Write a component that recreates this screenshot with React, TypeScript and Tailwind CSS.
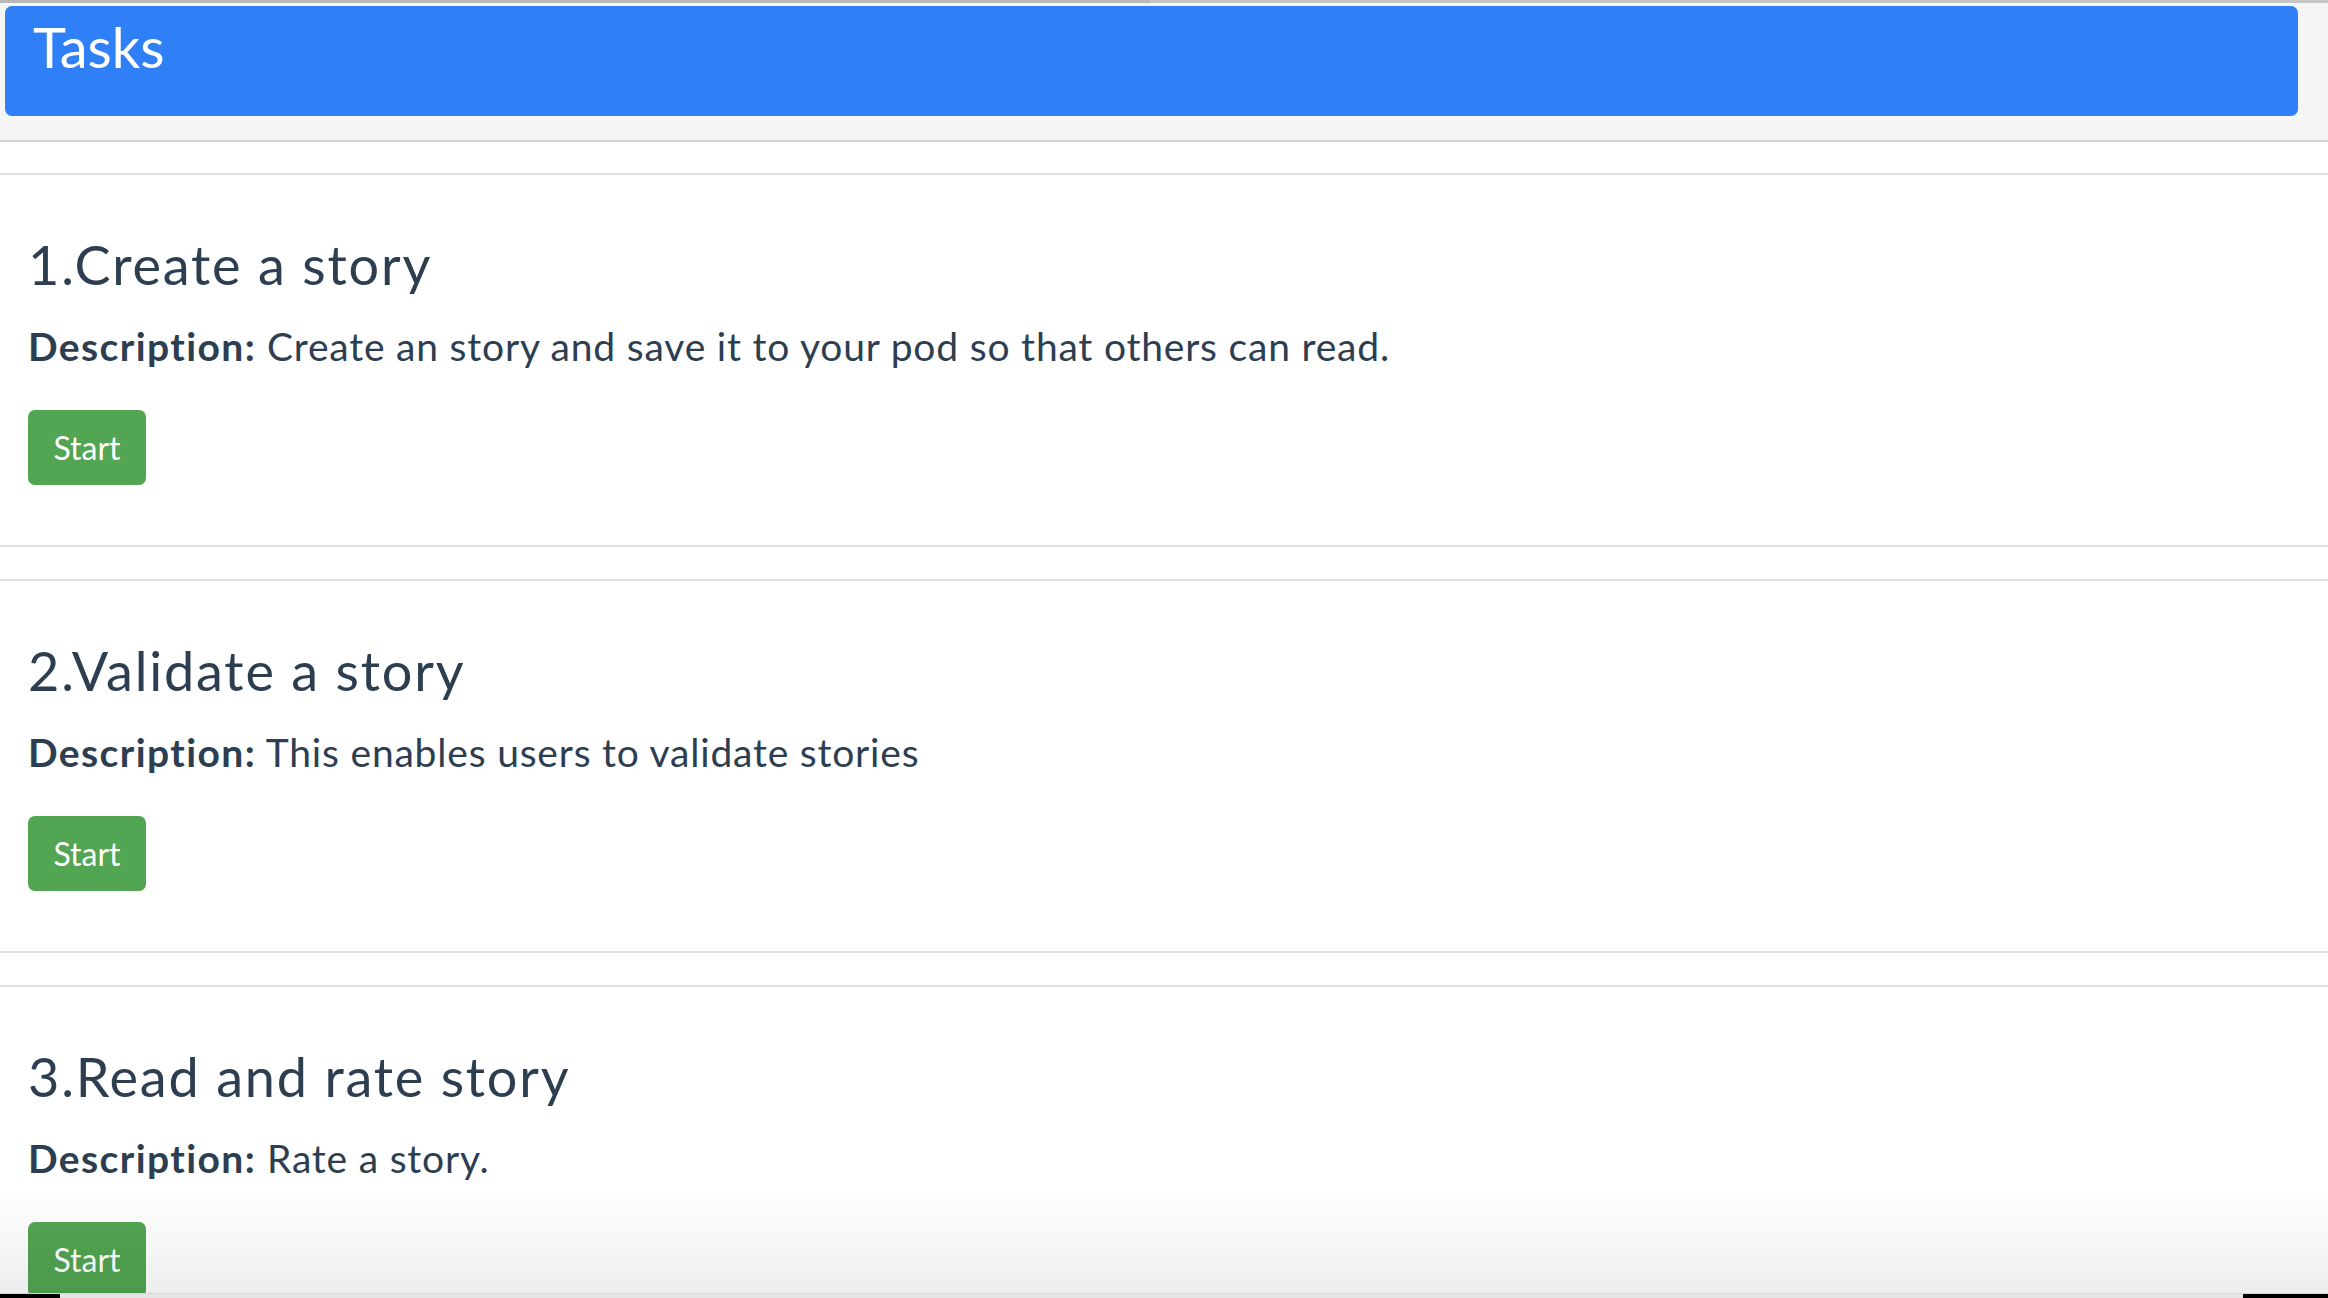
import React from "react";

const tasks = [
  { n: 1, title: "Create a story", desc: "Create an story and save it to your pod so that others can read." },
  { n: 2, title: "Validate a story", desc: "This enables users to validate stories" },
  { n: 3, title: "Read and rate story", desc: "Rate a story." },
];

export default function App() {
  return (
    <div className="min-h-screen bg-white text-[#2c3e50] font-['Lato','Open_Sans',sans-serif]">
      <div className="flex h-[3px]">
        <div className="w-[1150px] bg-[#b9b9b9]" />
        <div className="flex-1 bg-[#c6c6c6]" />
      </div>
      <div className="bg-[#f5f5f5] pt-[3px] pl-[5px] pr-[30px] pb-[24px] border-b-2 border-[#d4d4d4]">
        <div className="h-[110px] rounded-[7px] bg-[#2f80f6] pl-[28px] pt-[8px]">
          <h1 className="text-[56px] leading-[66px] text-white font-normal">Tasks</h1>
        </div>
      </div>
      <div className="flex flex-col gap-[32px] pt-[31px]">
        {tasks.map((t) => (
          <div key={t.n} className="border-y-2 border-[#dedede] pl-[28px] pt-[60px] pb-[60px]">
            <h2 className="text-[54px] leading-[60px] font-normal tracking-[1.8px]">
              {t.n}.{t.title}
            </h2>
            <p className="mt-[27px] text-[39px] leading-[48px] tracking-[0.8px]">
              <span className="font-bold tracking-[1.4px]">Description:</span> {t.desc}
            </p>
            <button className="mt-[40px] flex h-[75px] w-[118px] items-center justify-center rounded-[7px] bg-[#52a552] text-[32px] text-white">
              Start
            </button>
          </div>
        ))}
      </div>
      <div className="pointer-events-none fixed inset-x-0 bottom-0 h-[110px] bg-gradient-to-b from-transparent to-[rgba(0,0,0,0.07)]" />
      <div className="pointer-events-none fixed inset-x-0 bottom-0 flex h-[5px] flex-col">
        <div className="h-[1px] bg-[#d6d6d6]" />
        <div className="flex flex-1">
          <div className="w-[60px] bg-black" />
          <div className="flex-1 bg-[#e6e6e6]" />
          <div className="w-[85px] bg-black" />
        </div>
      </div>
    </div>
  );
}
